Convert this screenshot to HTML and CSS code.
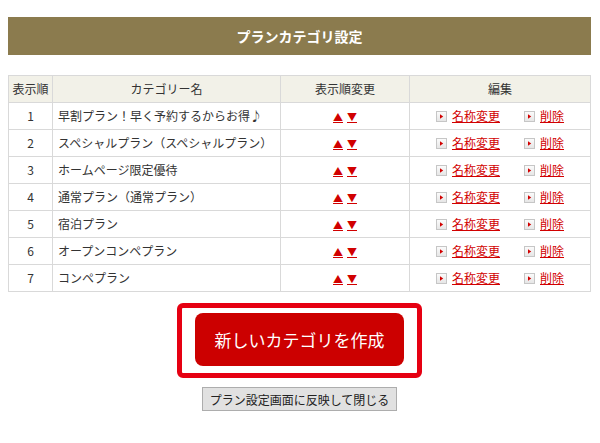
FILE: index.html
```html
<!DOCTYPE html>
<html lang="ja">
<head>
<meta charset="utf-8">
<title>プランカテゴリ設定</title>
<link rel="stylesheet" href="styles.css">
</head>
<body>
<div class="page">
  <div class="titlebar">プランカテゴリ設定</div>
  <table class="cats">
    <colgroup>
      <col class="c-no"><col class="c-name"><col class="c-order"><col class="c-edit">
    </colgroup>
    <thead>
      <tr><th>表示順</th><th>カテゴリー名</th><th>表示順変更</th><th>編集</th></tr>
    </thead>
    <tbody>
      <tr><td class="no">1</td><td class="name">早割プラン！早く予約するからお得♪</td><td class="order"><a href="#" class="arr">▲</a><a href="#" class="arr">▼</a></td><td class="edit"><span class="ico"><svg viewBox="0 0 11 11" width="11" height="11"><path d="M4 3.2 L7.2 5.5 L4 7.8 Z" fill="#d10000"/></svg></span><a href="#" class="lnk">名称変更</a><span class="ico ico2"><svg viewBox="0 0 11 11" width="11" height="11"><path d="M4 3.2 L7.2 5.5 L4 7.8 Z" fill="#d10000"/></svg></span><a href="#" class="lnk">削除</a></td></tr>
      <tr><td class="no">2</td><td class="name">スペシャルプラン（スペシャルプラン）</td><td class="order"><a href="#" class="arr">▲</a><a href="#" class="arr">▼</a></td><td class="edit"><span class="ico"><svg viewBox="0 0 11 11" width="11" height="11"><path d="M4 3.2 L7.2 5.5 L4 7.8 Z" fill="#d10000"/></svg></span><a href="#" class="lnk">名称変更</a><span class="ico ico2"><svg viewBox="0 0 11 11" width="11" height="11"><path d="M4 3.2 L7.2 5.5 L4 7.8 Z" fill="#d10000"/></svg></span><a href="#" class="lnk">削除</a></td></tr>
      <tr><td class="no">3</td><td class="name">ホームページ限定優待</td><td class="order"><a href="#" class="arr">▲</a><a href="#" class="arr">▼</a></td><td class="edit"><span class="ico"><svg viewBox="0 0 11 11" width="11" height="11"><path d="M4 3.2 L7.2 5.5 L4 7.8 Z" fill="#d10000"/></svg></span><a href="#" class="lnk">名称変更</a><span class="ico ico2"><svg viewBox="0 0 11 11" width="11" height="11"><path d="M4 3.2 L7.2 5.5 L4 7.8 Z" fill="#d10000"/></svg></span><a href="#" class="lnk">削除</a></td></tr>
      <tr><td class="no">4</td><td class="name">通常プラン（通常プラン）</td><td class="order"><a href="#" class="arr">▲</a><a href="#" class="arr">▼</a></td><td class="edit"><span class="ico"><svg viewBox="0 0 11 11" width="11" height="11"><path d="M4 3.2 L7.2 5.5 L4 7.8 Z" fill="#d10000"/></svg></span><a href="#" class="lnk">名称変更</a><span class="ico ico2"><svg viewBox="0 0 11 11" width="11" height="11"><path d="M4 3.2 L7.2 5.5 L4 7.8 Z" fill="#d10000"/></svg></span><a href="#" class="lnk">削除</a></td></tr>
      <tr><td class="no">5</td><td class="name">宿泊プラン</td><td class="order"><a href="#" class="arr">▲</a><a href="#" class="arr">▼</a></td><td class="edit"><span class="ico"><svg viewBox="0 0 11 11" width="11" height="11"><path d="M4 3.2 L7.2 5.5 L4 7.8 Z" fill="#d10000"/></svg></span><a href="#" class="lnk">名称変更</a><span class="ico ico2"><svg viewBox="0 0 11 11" width="11" height="11"><path d="M4 3.2 L7.2 5.5 L4 7.8 Z" fill="#d10000"/></svg></span><a href="#" class="lnk">削除</a></td></tr>
      <tr><td class="no">6</td><td class="name">オープンコンペプラン</td><td class="order"><a href="#" class="arr">▲</a><a href="#" class="arr">▼</a></td><td class="edit"><span class="ico"><svg viewBox="0 0 11 11" width="11" height="11"><path d="M4 3.2 L7.2 5.5 L4 7.8 Z" fill="#d10000"/></svg></span><a href="#" class="lnk">名称変更</a><span class="ico ico2"><svg viewBox="0 0 11 11" width="11" height="11"><path d="M4 3.2 L7.2 5.5 L4 7.8 Z" fill="#d10000"/></svg></span><a href="#" class="lnk">削除</a></td></tr>
      <tr><td class="no">7</td><td class="name">コンペプラン</td><td class="order"><a href="#" class="arr">▲</a><a href="#" class="arr">▼</a></td><td class="edit"><span class="ico"><svg viewBox="0 0 11 11" width="11" height="11"><path d="M4 3.2 L7.2 5.5 L4 7.8 Z" fill="#d10000"/></svg></span><a href="#" class="lnk">名称変更</a><span class="ico ico2"><svg viewBox="0 0 11 11" width="11" height="11"><path d="M4 3.2 L7.2 5.5 L4 7.8 Z" fill="#d10000"/></svg></span><a href="#" class="lnk">削除</a></td></tr>
    </tbody>
  </table>
  <div class="actions">
    <div class="highlight"><button class="create">新しいカテゴリを作成</button></div>
    <button class="close">プラン設定画面に反映して閉じる</button>
  </div>
</div>
</body>
</html>
```
FILE: styles.css
```css
html, body {
  margin: 0;
  padding: 0;
  background: #ffffff;
}
body {
  font-family: "Noto Sans CJK JP", "Noto Sans", sans-serif;
  font-size: 12px;
  color: #333333;
}
.page {
  width: 583px;
  padding: 17px 0 0 8px;
}
.titlebar {
  height: 38px;
  line-height: 38px;
  background: #8b7b4e;
  color: #ffffff;
  font-weight: bold;
  font-size: 14px;
  text-align: center;
}
.cats {
  margin-top: 20px;
  width: 582px;
  border-collapse: collapse;
  table-layout: fixed;
  border: 1px solid #d9d9d9;
}
.c-no { width: 44px; }
.c-name { width: 228px; }
.c-order { width: 129px; }
.c-edit { width: 181px; }
.cats th, .cats td {
  border: 1px solid #d9d9d9;
  height: 26px;
  padding: 0;
  line-height: 16px;
}
.cats th {
  background: #f2f1e8;
  font-weight: normal;
  text-align: center;
  color: #333333;
}
.no { text-align: center; }
.name { padding-left: 5px !important; text-align: left; }
.order { text-align: center; }
.arr {
  color: #d10000;
  text-decoration: underline;
  font-size: 10px;
  margin: 0 2px;
}
.edit {
  text-align: center;
  white-space: nowrap;
}
.ico {
  display: inline-block;
  width: 11px;
  height: 11px;
  box-sizing: border-box;
  border: 1px solid #c6c6c6;
  background: linear-gradient(#fbfbfb, #e6e6e6);
  vertical-align: -1px;
  margin-right: 5px;
  position: relative;
}
.ico svg {
  position: absolute;
  left: -1px;
  top: -1px;
}
.ico2 { margin-left: 24px; }
.lnk {
  color: #d10000;
  text-decoration: underline;
}
.actions {
  display: flex;
  flex-direction: column;
  align-items: center;
  margin-top: 11px;
}
.highlight {
  border: 5px solid #e60012;
  border-radius: 6px;
  padding: 5px 13px 7px;
  width: 209px;
}
.create {
  display: block;
  width: 209px;
  height: 53px;
  background: #cc0000;
  color: #ffffff;
  border: none;
  border-radius: 8px;
  font-family: "Noto Sans CJK JP", "Noto Sans", sans-serif;
  font-size: 17px;
  padding: 0;
}
.close {
  margin-top: 9px;
  width: 195px;
  height: 24px;
  background: #e1e1e1;
  border: 1px solid #adadad;
  color: #222222;
  font-family: "Noto Sans CJK JP", "Noto Sans", sans-serif;
  font-size: 12px;
  padding: 0;
}
```
